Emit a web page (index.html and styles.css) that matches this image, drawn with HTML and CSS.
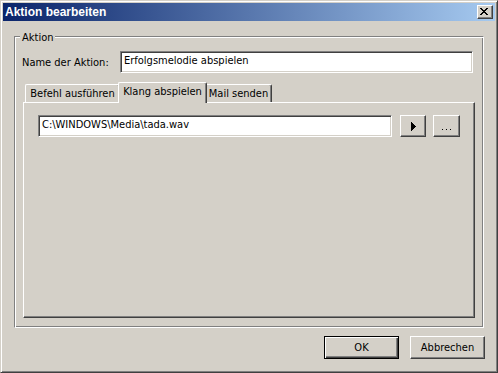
FILE: index.html
```html
<!DOCTYPE html>
<html lang="de">
<head>
<meta charset="utf-8">
<title>Aktion bearbeiten</title>
<link rel="stylesheet" href="styles.css">
</head>
<body>
<div class="window">
  <div class="titlebar">
    <span class="title">Aktion bearbeiten</span>
    <button class="close" aria-label="Schließen">
      <svg width="8" height="7" viewBox="0 0 8 7" shape-rendering="crispEdges"><path fill="#000" d="M0 0h2v1h-2z M6 0h2v1h-2z M1 1h2v1h-2z M5 1h2v1h-2z M2 2h4v1h-4z M3 3h2v1h-2z M2 4h4v1h-4z M1 5h2v1h-2z M5 5h2v1h-2z M0 6h2v1h-2z M6 6h2v1h-2z"/></svg>
    </button>
  </div>
  <div class="content">
    <div class="group">
      <span class="group-label">Aktion</span>
      <div class="name-row">
        <span class="name-label">Name der Aktion:</span>
        <div class="textbox name-input">Erfolgsmelodie abspielen</div>
      </div>
      <div class="tabs">
        <div class="tab-strip">
          <div class="tab tab-1">Befehl ausführen</div>
          <div class="tab tab-2 active">Klang abspielen</div>
          <div class="tab tab-3">Mail senden</div>
        </div>
        <div class="tab-panel">
          <div class="file-row">
            <div class="textbox path-input">C:\WINDOWS\Media\tada.wav</div>
            <button class="btn icon-btn play" aria-label="Abspielen">
              <svg width="5" height="9" viewBox="0 0 5 9" shape-rendering="crispEdges"><path fill="#000" d="M0 0h1v1h1v1h1v1h1v1h1v1h-1v1h-1v1h-1v1h-1v1h-1z"/></svg>
            </button>
            <button class="btn icon-btn browse" aria-label="Durchsuchen">
              <svg width="9" height="7" viewBox="0 0 9 7" shape-rendering="crispEdges"><path fill="#000" d="M0 6h1v1h-1z M4 6h1v1h-1z M8 6h1v1h-1z"/></svg>
            </button>
          </div>
        </div>
      </div>
    </div>
    <div class="actions">
      <button class="btn push default">OK</button>
      <button class="btn push">Abbrechen</button>
    </div>
  </div>
</div>
</body>
</html>
```

FILE: styles.css
```css
* {
  box-sizing: border-box;
}

html,
body {
  margin: 0;
  padding: 0;
}

body {
  width: 498px;
  height: 373px;
  overflow: hidden;
  background: #d4d0c8;
  font-family: "DejaVu Sans Condensed", "Liberation Sans", Arial, sans-serif;
  font-size: 11px;
  color: #000;
}

.window {
  width: 498px;
  height: 373px;
  display: flex;
  flex-direction: column;
  border: 1px solid;
  border-color: #d4d0c8 #404040 #404040 #d4d0c8;
  box-shadow: inset 1px 1px #fff, inset -1px -1px #808080;
  padding: 2px;
  background: #d4d0c8;
}

.titlebar {
  height: 18px;
  display: flex;
  align-items: center;
  padding: 0 2px;
  background: linear-gradient(to right, #0a246a, #a6caf0);
}

.title {
  flex: 1;
  color: #fff;
  font-family: "Liberation Sans", Arial, sans-serif;
  font-weight: bold;
  font-size: 12px;
  line-height: 18px;
  white-space: nowrap;
}

button {
  font: inherit;
  color: #000;
  margin: 0;
  background: #d4d0c8;
  appearance: none;
  -webkit-appearance: none;
  outline: none;
}

.close {
  width: 16px;
  height: 14px;
  padding: 2px 0 0 2px;
  display: flex;
  align-items: flex-start;
  justify-content: flex-start;
  border: 1px solid;
  border-color: #fff #404040 #404040 #fff;
  box-shadow: inset -1px -1px #808080;
}

.close svg {
  display: block;
}

.content {
  flex: 1;
  display: flex;
  flex-direction: column;
}

.group {
  position: relative;
  width: 470px;
  height: 292px;
  margin: 15px 0 0 11px;
  padding: 14px 0 9px;
  border: 1px solid;
  border-color: #808080 #fff #fff #808080;
  box-shadow: inset 1px 1px #fff, inset -1px -1px #808080;
  display: flex;
  flex-direction: column;
}

.group-label {
  position: absolute;
  top: -6px;
  left: 5px;
  padding: 0 2px;
  line-height: 13px;
  background: #d4d0c8;
}

.name-row {
  display: flex;
  height: 22px;
  margin: 0 10px 0 7px;
}

.name-label {
  width: 98px;
  line-height: 22px;
  padding-top: 1px;
  white-space: nowrap;
}

.textbox {
  height: 22px;
  padding: 0 3px;
  line-height: 18px;
  background: #fff;
  border: 1px solid;
  border-color: #808080 #fff #fff #808080;
  box-shadow: inset 1px 1px #404040, inset -1px -1px #d4d0c8;
  white-space: nowrap;
  overflow: hidden;
}

.name-input {
  flex: 1;
}

.tabs {
  margin: 9px 8px 0;
  flex: 1;
  display: flex;
  flex-direction: column;
}

.tab-strip {
  display: flex;
  align-items: flex-end;
  height: 20px;
  padding-left: 2px;
}

.tab {
  height: 18px;
  line-height: 17px;
  text-align: center;
  white-space: nowrap;
  background: #d4d0c8;
  border-top: 1px solid #fff;
  border-left: 1px solid #fff;
  border-right: 1px solid #404040;
  border-radius: 2px 2px 0 0;
  box-shadow: inset -1px 0 #808080;
}

.tab-1 {
  width: 95px;
}

.tab-2 {
  width: 89px;
}

.tab-3 {
  width: 67px;
}

.tab.active {
  position: relative;
  z-index: 1;
  height: 21px;
  margin: 0 -2px -1px;
}

.tab-panel {
  height: 216px;
  padding: 12px 14px;
  border: 1px solid;
  border-color: #fff #404040 #404040 #fff;
  box-shadow: inset -1px -1px #808080;
}

.file-row {
  display: flex;
  height: 22px;
}

.path-input {
  width: 356px;
}

.btn {
  padding: 0;
  border: 1px solid;
  border-color: #fff #404040 #404040 #fff;
  box-shadow: inset -1px -1px #808080;
  display: flex;
  align-items: center;
  justify-content: center;
}

.btn svg {
  display: block;
}

.icon-btn {
  height: 22px;
}

.play {
  width: 26px;
  margin-left: 8px;
}

.browse {
  width: 27px;
  margin-left: 7px;
}

.actions {
  display: flex;
  justify-content: flex-end;
  gap: 11px;
  margin-top: 8px;
  padding-right: 10px;
}

.push {
  width: 75px;
  height: 23px;
  line-height: 21px;
}

.push.default {
  border: 1px solid #000;
  box-shadow: inset 1px 1px #fff, inset -1px -1px #404040, inset -2px -2px #808080;
}
```
